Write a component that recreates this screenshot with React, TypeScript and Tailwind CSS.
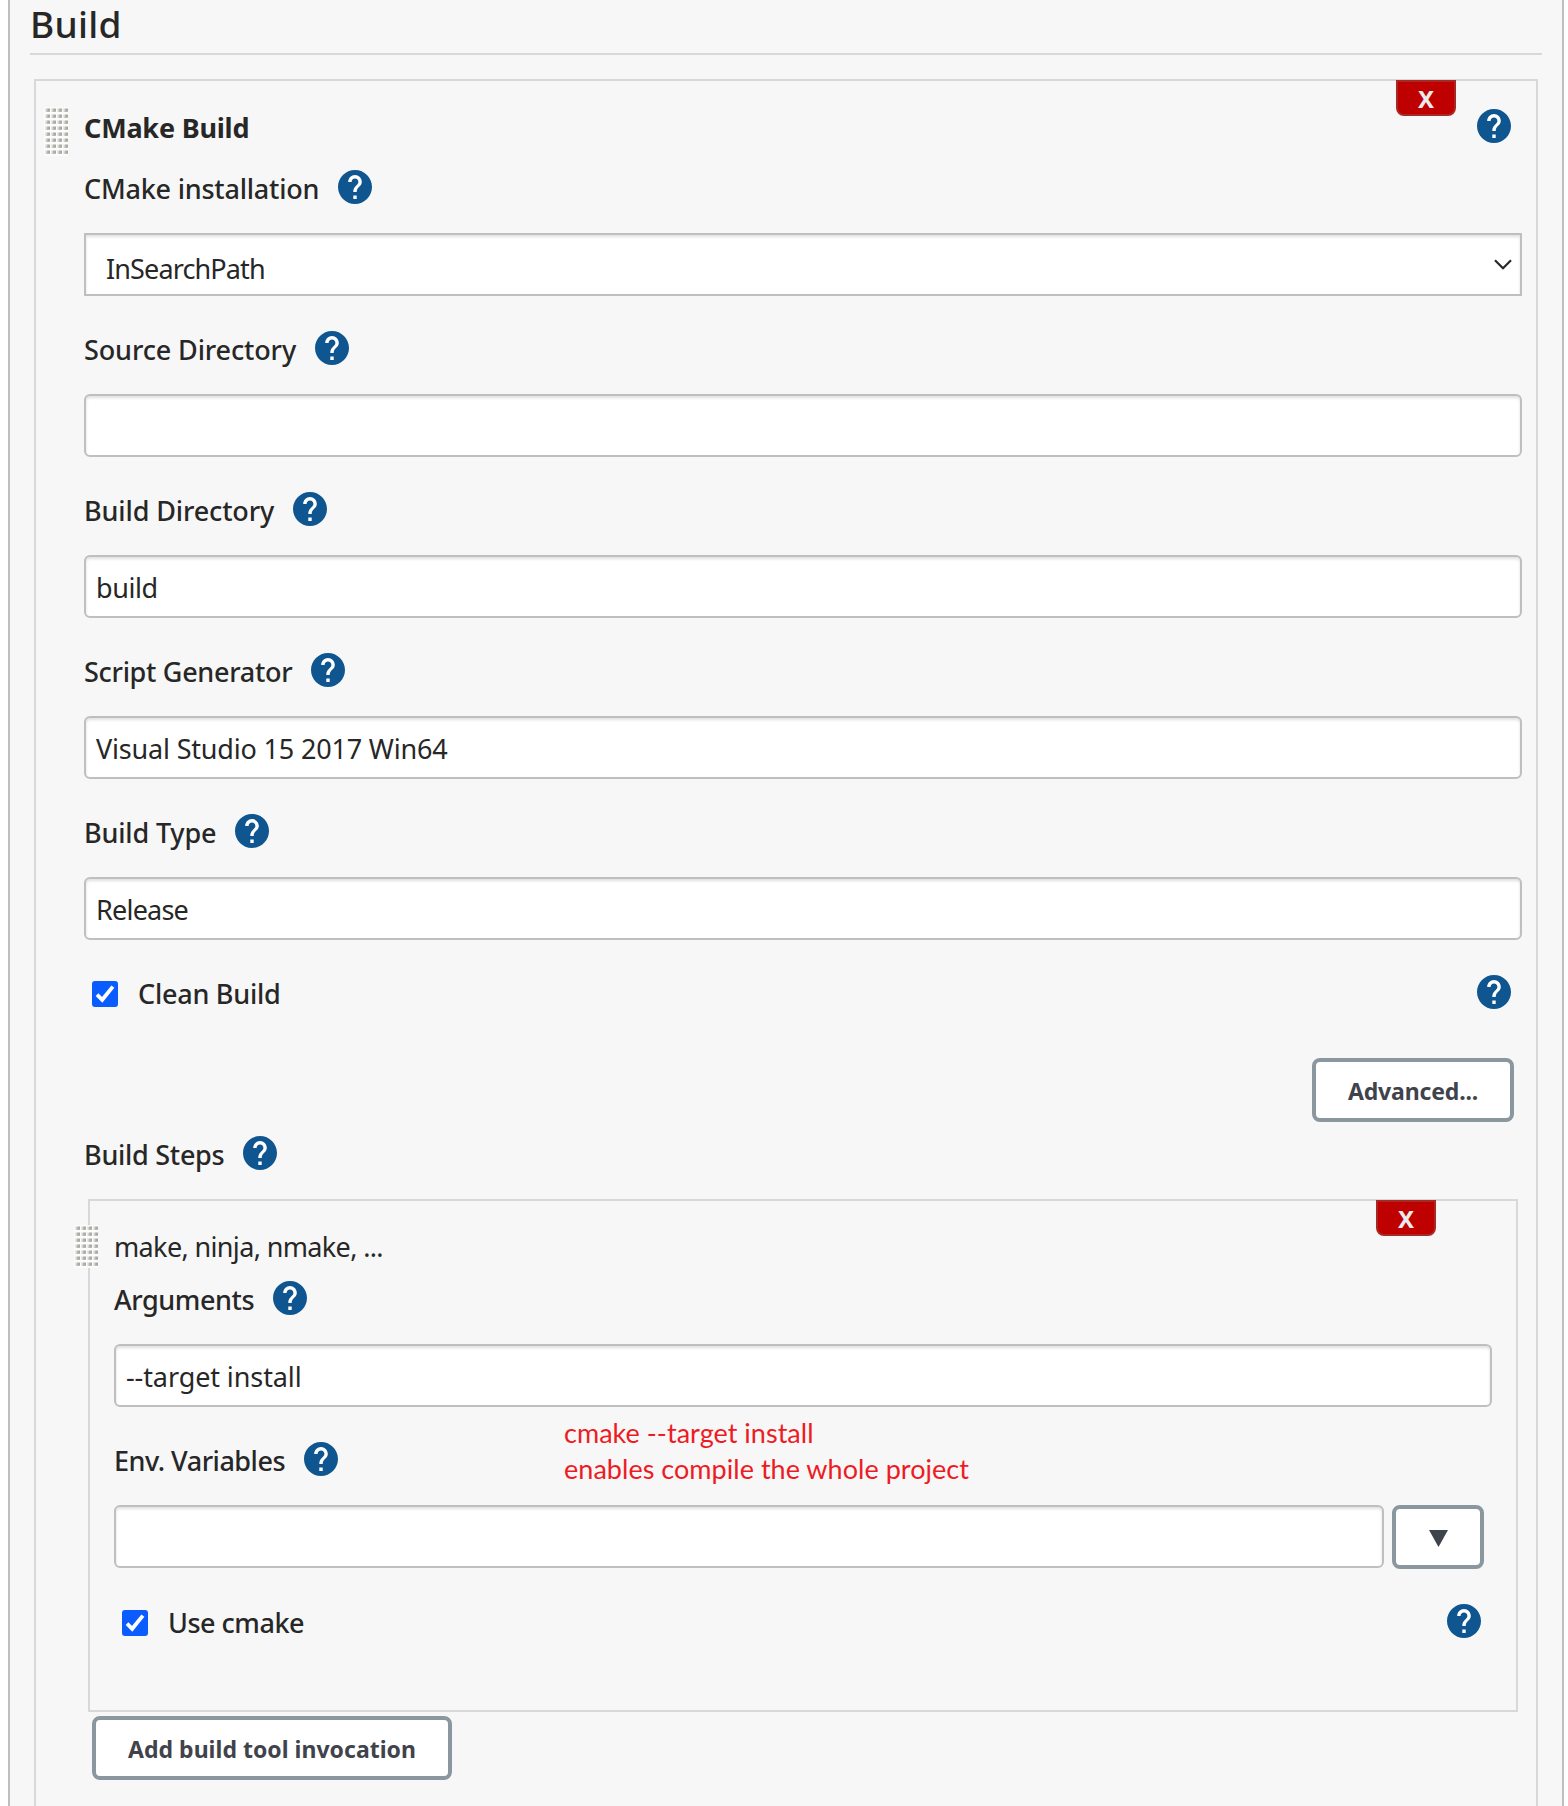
import type { ReactNode } from "react";

function Help({ className = "" }: { className?: string }) {
  return (
    <svg viewBox="2 2 20 20" className={`block size-[34px] shrink-0 ${className}`}>
      <circle cx="12" cy="12" r="9.5" fill="#fff" />
      <path
        fill="#0f5691"
        d="M12 2C6.48 2 2 6.48 2 12s4.48 10 10 10 10-4.48 10-10S17.52 2 12 2zm1 17h-2v-2h2v2zm2.07-7.75-.9.92C13.45 12.9 13 13.5 13 15h-2v-.5c0-1.1.45-2.1 1.17-2.83l1.24-1.26c.37-.36.59-.86.59-1.41 0-1.1-.9-2-2-2s-2 .9-2 2H8c0-2.21 1.79-4 4-4s4 1.79 4 4c0 .88-.36 1.68-.93 2.25z"
      />
    </svg>
  );
}

/* Dotted grip used to reorder a section. */
function Grip({ id, rows, className }: { id: string; rows: number; className: string }) {
  const height = rows * 6 + 1;
  return (
    <svg width="24" height={height} className={`absolute ${className}`}>
      <defs>
        <pattern id={id} width="6" height="6" patternUnits="userSpaceOnUse">
          <rect width="6" height="6" fill="#fcfcfb" />
          <rect x="1" y="1" width="5" height="4" fill="#e8e8e6" />
          <rect x="2" y="1" width="4" height="4" fill="#d2d2cf" />
          <rect x="3" y="2" width="3" height="3" fill="#b9b9b5" />
          <rect x="4" y="2" width="2" height="2" fill="#a9a9a5" />
          <rect x="2" y="1" width="1" height="1" fill="#f0f0ee" />
        </pattern>
      </defs>
      <rect width="24" height={height} fill={`url(#${id})`} />
    </svg>
  );
}

function LabelRow({ label, tracking }: { label: string; tracking: string }) {
  return (
    <div className="flex h-[98px] items-start gap-[19px] pt-[35px]">
      <span className={`whitespace-pre text-[27px] leading-[38px] font-medium ${tracking}`}>{label}</span>
      <Help />
    </div>
  );
}

function TextInput({ value = "", tracking = "", className = "w-full" }: { value?: string; tracking?: string; className?: string }) {
  return (
    <input
      readOnly
      value={value}
      className={`block h-[63px] rounded-[6px] border-2 border-[#bfbfbf] bg-white px-[10px] pt-[2px] text-[27px] text-[#272727] shadow-[inset_0_2px_3px_rgba(0,0,0,0.12)] outline-none ${tracking} ${className}`}
    />
  );
}

function Check() {
  return (
    <span className="block size-[26px] rounded-[3px] bg-[#0a5cff]">
      <svg viewBox="0 0 26 26" className="block size-[26px]">
        <path d="M5 13.6 10.2 18.8 20.9 5.6" fill="none" stroke="#fff" strokeWidth="3.8" />
      </svg>
    </span>
  );
}

function RemoveButton({ className }: { className: string }) {
  return (
    <button className={`absolute flex h-9 w-[60px] justify-center rounded-b-[8px] border-2 border-[#a82824] bg-[#bf0000] text-[24px] leading-[33px] font-bold text-[#ebebeb] ${className}`}>
      X
    </button>
  );
}

function Button({ children, className }: { children: ReactNode; className: string }) {
  return (
    <button className={`block h-16 rounded-[8px] border-4 border-[#8a979f] bg-white pt-[2px] text-center text-[23px] leading-[32px] font-bold whitespace-pre text-[#3f434b] ${className}`}>
      {children}
    </button>
  );
}

export default function App() {
  return (
    <div className="h-[1806px] overflow-hidden bg-white pr-[4px] pl-[8px] font-['Noto_Sans','Open_Sans',sans-serif] text-[#272727]">
      <div className="h-full border-x-2 border-[#bfbfbf] bg-[#f7f7f7] pr-[20px] pl-[20px]">
        <h1 className="h-[55px] border-b-2 border-[#d8d8d8] text-[37px] leading-[48px] font-[550] tracking-[0.3px]">Build</h1>

        <section className="relative mt-6 mr-[4px] ml-[4px] h-[1800px] border-2 border-[#d8d8d8] pr-[14px] pl-[48px]">
          <RemoveButton className="-top-px right-[80px]" />
          <Help className="absolute top-[28px] right-[25px]" />
          <Grip id="grip-outer" rows={8} className="top-[26px] left-[8px]" />

          <h2 className="h-[54px] pt-[28px] text-[27px] leading-[38px] font-bold tracking-[-0.2px]">CMake Build</h2>

          <LabelRow label="CMake installation" tracking="tracking-[-0.22px]" />
          <div className="flex h-[63px] items-start justify-between border-2 border-[#bfbfbf] bg-white pt-[15px] pr-[8px] pl-[20px] shadow-[inset_0_2px_3px_rgba(0,0,0,0.12)]">
            <span className="text-[27px] leading-[38px] tracking-[-0.87px]">InSearchPath</span>
            <svg viewBox="0 0 18 11" className="mt-[9px] h-[11px] w-[18px]">
              <path d="M1 1.2 9 9.2 17 1.2" fill="none" stroke="#272727" strokeWidth="2.2" />
            </svg>
          </div>

          <LabelRow label="Source Directory" tracking="tracking-[-0.13px]" />
          <TextInput />

          <LabelRow label="Build Directory" tracking="tracking-[-0.13px]" />
          <TextInput value="build" tracking="tracking-[-0.4px]" />

          <LabelRow label="Script Generator" tracking="tracking-[-0.3px]" />
          <TextInput value="Visual Studio 15 2017 Win64" tracking="tracking-[-0.18px]" />

          <LabelRow label="Build Type" tracking="tracking-[-0.17px]" />
          <TextInput value="Release" tracking="tracking-[-0.78px]" />

          <div className="flex h-[118px] items-start pt-[35px] pr-[11px] pl-[8px]">
            <div className="mt-[6px]"><Check /></div>
            <span className="ml-[20px] flex-1 text-[27px] leading-[38px] font-medium tracking-[-0.25px]">Clean Build</span>
            <Help />
          </div>
          <div className="flex h-[43px] justify-end pr-[8px]">
            <Button className="w-[202px] tracking-[-0.15px]">Advanced...</Button>
          </div>
          <LabelRow label="Build Steps" tracking="tracking-[-0.28px]" />

          <div className="relative mr-[4px] ml-[4px] h-[513px] border-2 border-[#d8d8d8] pr-[24px] pl-[24px]">
            <RemoveButton className="-top-px right-[80px]" />
            <Grip id="grip-inner" rows={7} className="top-[24px] -left-[16px]" />
            <p className="h-[45px] pt-[27px] text-[27px] leading-[38px] tracking-[-0.64px]">make, ninja, nmake, ...</p>
            <LabelRow label="Arguments" tracking="tracking-[-0.43px]" />
            <TextInput value="--target install" tracking="tracking-[-0.1px]" />

            <div className="relative">
              <LabelRow label="Env. Variables" tracking="tracking-[-0.48px]" />
              <p className="absolute top-[8px] left-[450px] font-[Lato] text-[27px] leading-[36px] tracking-[0.03px] whitespace-pre text-[#ed1c24]">
                {"cmake --target install\nenables compile the whole project"}
              </p>
            </div>
            <div className="flex gap-[8px]">
              <TextInput className="w-[1270px]" />
              <Button className="flex w-[92px] items-center justify-center">
                <svg viewBox="0 0 19 17" className="h-[17px] w-[19px]">
                  <path d="M0 0H19L9.5 17Z" fill="#3f434b" />
                </svg>
              </Button>
            </div>

            <div className="flex items-start pt-[35px] pr-[11px] pl-[8px]">
              <div className="mt-[6px]"><Check /></div>
              <span className="ml-[20px] flex-1 text-[27px] leading-[38px] font-medium tracking-[-0.49px]">Use cmake</span>
              <Help />
            </div>
          </div>
          <div className="pt-[4px] pl-[8px]">
            <Button className="w-[360px] tracking-[0.02px]">Add build tool invocation</Button>
          </div>
        </section>
      </div>
    </div>
  );
}
